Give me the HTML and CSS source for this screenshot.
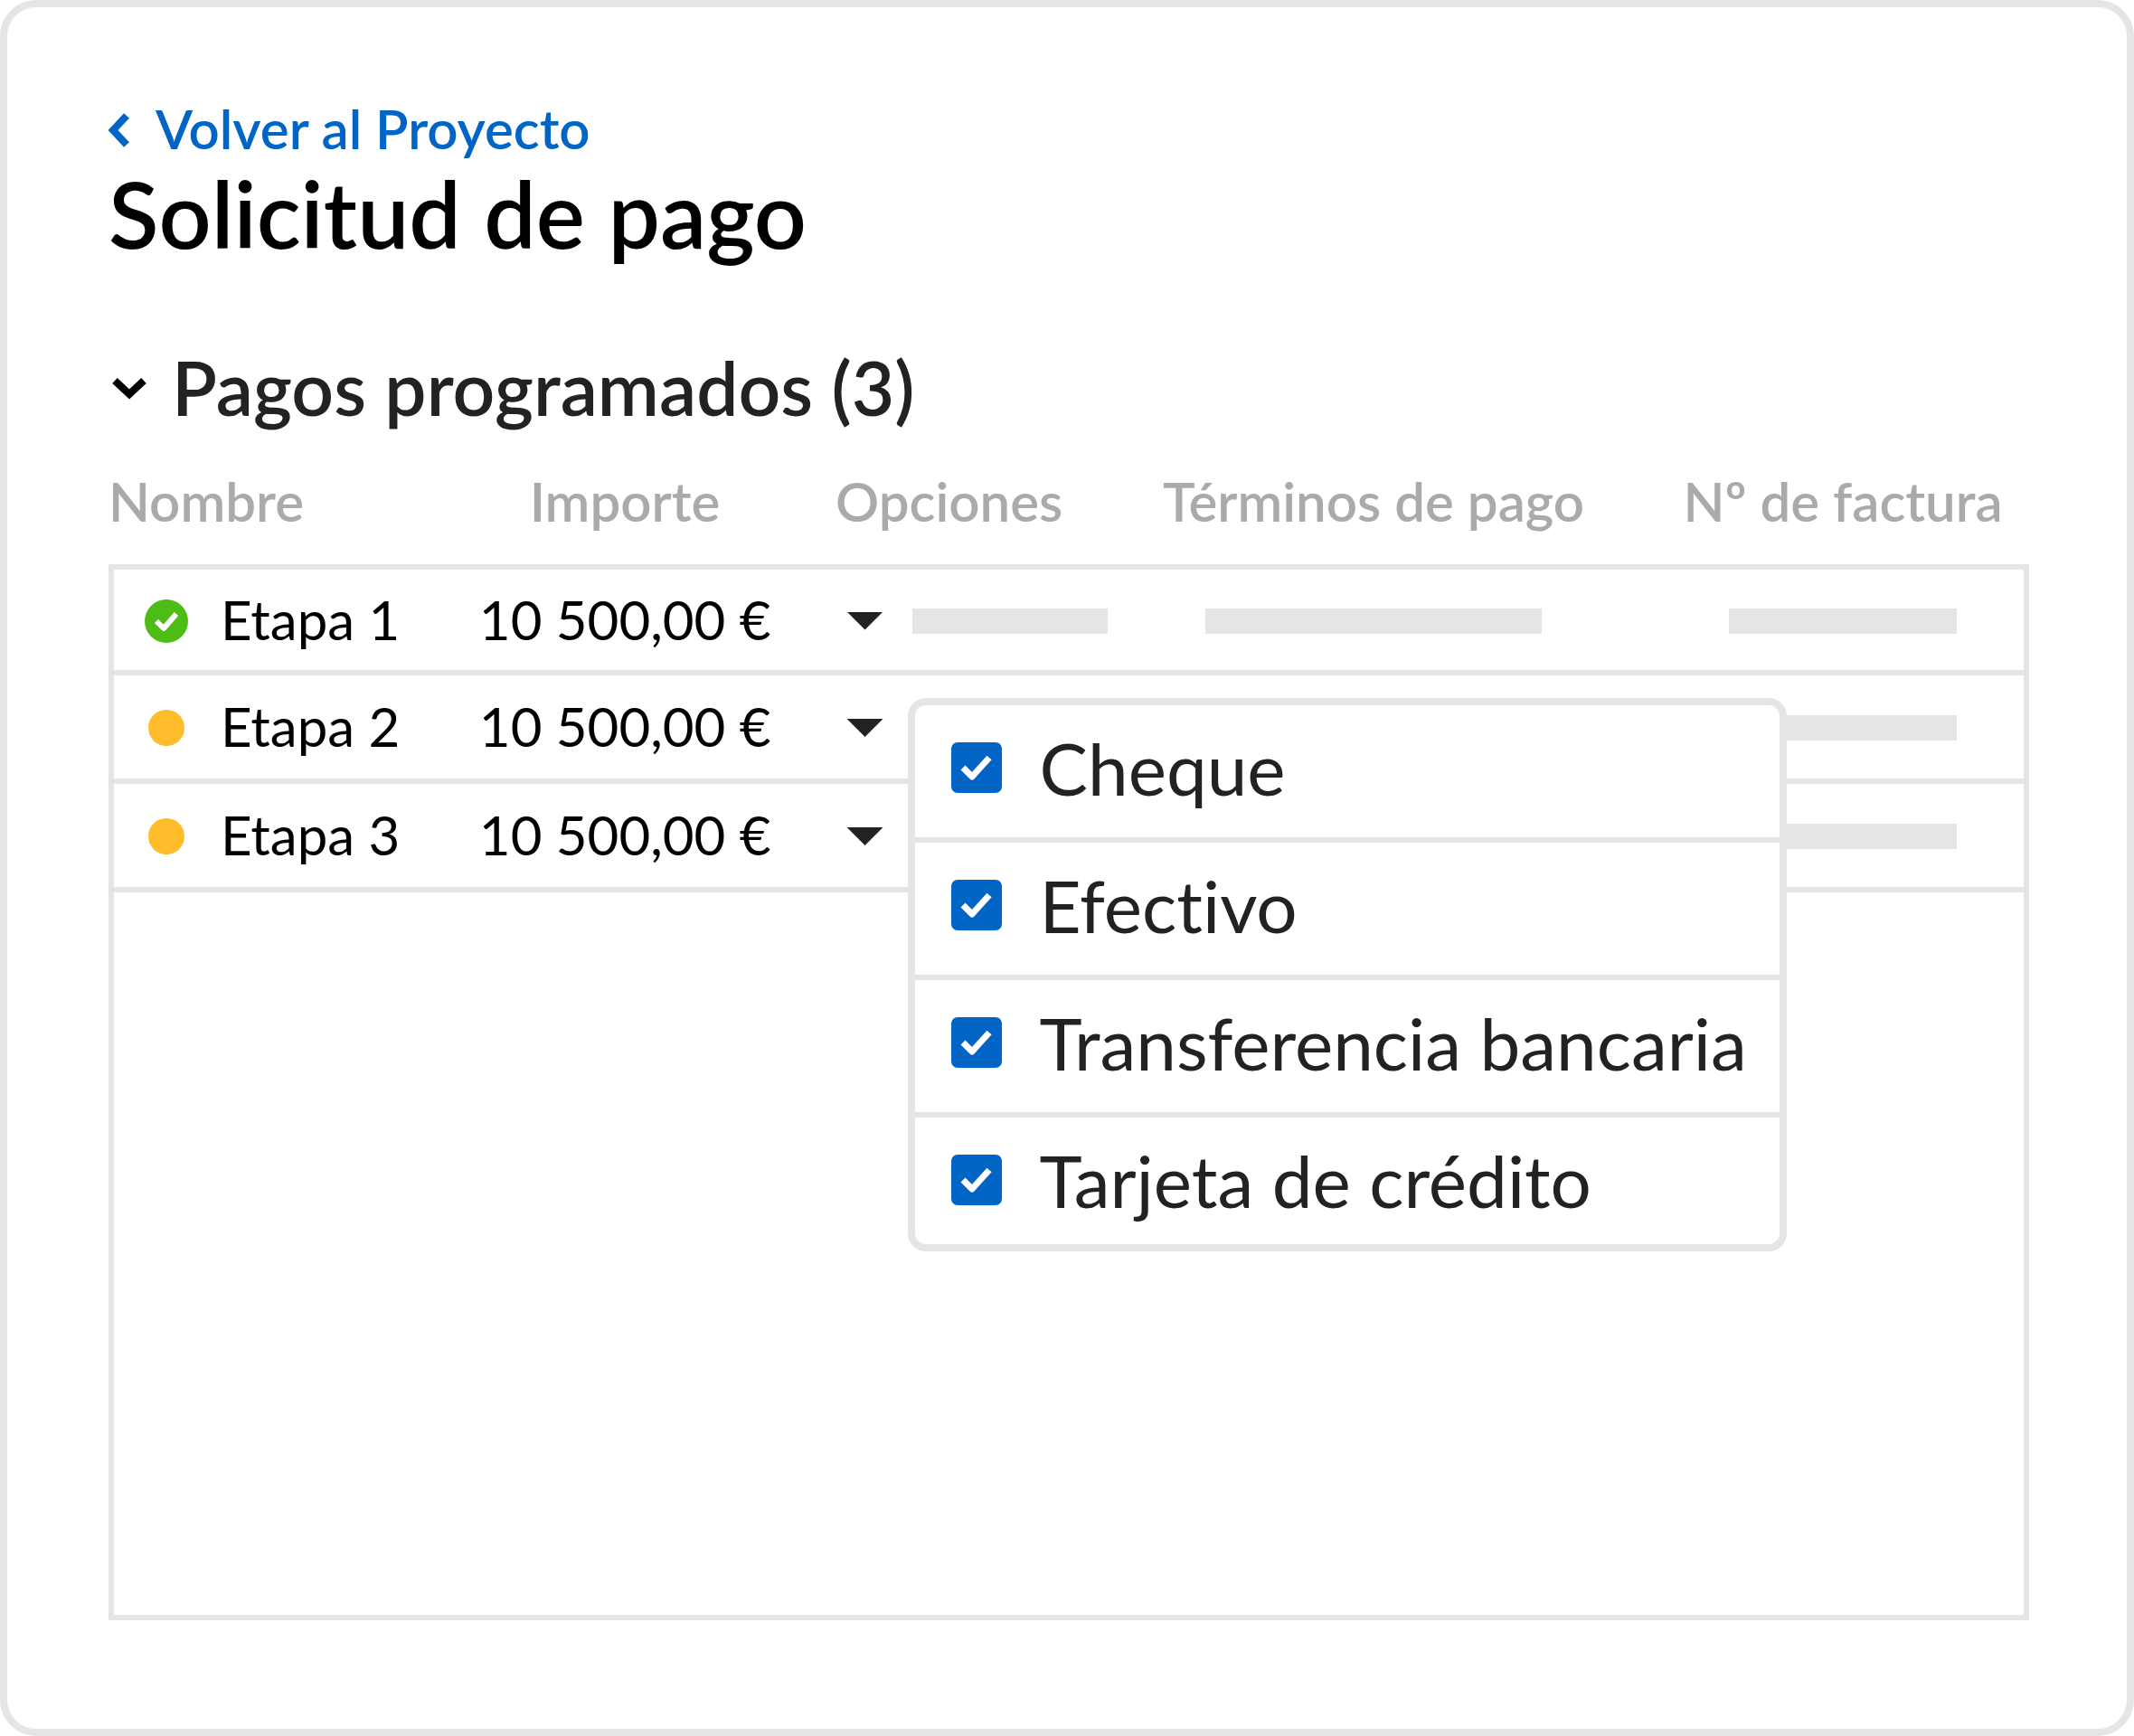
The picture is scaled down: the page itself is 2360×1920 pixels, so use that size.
FILE: index.html
```html
<!DOCTYPE html>
<html lang="es">
<head>
    <meta charset="UTF-8">
    <meta name="viewport" content="width=device-width, initial-scale=1.0">
    <title>Solicitud de pago</title>
    <link rel="stylesheet" href="styles.css">
</head>
<body>

<main class="card">
    <a href="#" class="back-link">
        <svg class="back-icon" width="24" height="38" viewBox="0 0 24 38"><path d="M20 3L5 19l15 16" /></svg>
        Volver al Proyecto
    </a>
    <h1 class="title">Solicitud de pago</h1>

    <h2 class="section-heading">
        <button type="button" class="section-toggle" aria-expanded="true">
            <svg class="toggle-icon" width="38" height="24" viewBox="0 0 38 24"><path d="M3 3l16 15L35 3" /></svg>
            Pagos programados (3)
        </button>
    </h2>

    <table class="payments">
        <thead>
            <tr>
                <th class="name">Nombre</th>
                <th class="amount">Importe</th>
                <th class="options">Opciones</th>
                <th class="terms">Términos de pago</th>
                <th class="invoice">Nº de factura</th>
            </tr>
        </thead>
        <tbody>
            <tr>
                <td class="name">
                    <svg class="status" width="48" height="48" viewBox="0 0 48 48"><circle cx="24" cy="24" r="24" fill="#4dbd15" /><path d="M13 24l8 8 14-16" fill="none" stroke="#fff" stroke-width="6" stroke-linejoin="round" /></svg>
                    Etapa 1
                </td>
                <td class="amount">10 500,00 €</td>
                <td class="options">
                    <button type="button" class="caret" aria-label="Opciones de Etapa 1"></button>
                    <span class="bar bar-options"></span>
                </td>
                <td class="terms"><span class="bar bar-terms"></span></td>
                <td class="invoice"><span class="bar bar-invoice"></span></td>
            </tr>
            <tr>
                <td class="name">
                    <svg class="status" width="48" height="48" viewBox="0 0 48 48"><circle cx="24" cy="24" r="20" fill="#ffbd2b" /></svg>
                    Etapa 2
                </td>
                <td class="amount">10 500,00 €</td>
                <td class="options">
                    <button type="button" class="caret" aria-label="Opciones de Etapa 2" aria-expanded="true"></button>
                    <div class="menu">
                        <label class="menu-item"><input type="checkbox" checked>Cheque</label>
                        <label class="menu-item"><input type="checkbox" checked>Efectivo</label>
                        <label class="menu-item"><input type="checkbox" checked>Transferencia bancaria</label>
                        <label class="menu-item"><input type="checkbox" checked>Tarjeta de crédito</label>
                    </div>
                </td>
                <td class="terms"></td>
                <td class="invoice"><span class="bar bar-invoice"></span></td>
            </tr>
            <tr>
                <td class="name">
                    <svg class="status" width="48" height="48" viewBox="0 0 48 48"><circle cx="24" cy="24" r="20" fill="#ffbd2b" /></svg>
                    Etapa 3
                </td>
                <td class="amount">10 500,00 €</td>
                <td class="options">
                    <button type="button" class="caret" aria-label="Opciones de Etapa 3"></button>
                </td>
                <td class="terms"></td>
                <td class="invoice"><span class="bar bar-invoice"></span></td>
            </tr>
        </tbody>
    </table>
</main>

</body>
</html>
```
FILE: styles.css
```css
* {
    box-sizing: border-box;
}

body {
    margin: 0;
    background: #ffffff;
    font-family: Lato, 'Open Sans', sans-serif;
    font-size: 60px;
    line-height: 72px;
    font-variant-ligatures: none;
    color: #000000;
}

.card {
    display: flex;
    flex-direction: column;
    min-height: 100vh;
    padding: 98px 108px 120px 112px;
    border: 8px solid #e5e5e5;
    border-radius: 40px;
}

.back-link {
    display: flex;
    align-items: center;
    gap: 28px;
    align-self: flex-start;
    font-weight: 600;
    color: #0065c4;
    text-decoration: none;
}

.back-icon,
.toggle-icon {
    margin-top: 4px;
    fill: none;
    stroke: currentColor;
    stroke-width: 8;
}

.title {
    margin: 0;
    font-size: 102px;
    line-height: 116px;
    font-weight: 600;
}

.section-heading {
    margin: 86px 0 0;
    font-size: 82px;
    line-height: 96px;
}

.section-toggle {
    display: flex;
    align-items: center;
    gap: 28px;
    padding: 0 4px;
    border: none;
    background: none;
    font: inherit;
    font-weight: 600;
    color: #222222;
    cursor: pointer;
}

.toggle-icon {
    color: #000000;
}

.payments {
    display: flex;
    flex-direction: column;
    flex: 1;
    margin-top: 42px;
}

.payments thead {
    display: block;
    margin-bottom: 34px;
}

.payments tbody {
    display: block;
    flex: 1;
    padding-top: 6px;
    box-shadow: inset 0 0 0 6px #e5e5e5;
}

.payments tr {
    display: grid;
    grid-template-columns: 362fr 322fr 330fr 482fr 436fr;
    column-gap: 48px;
}

.payments tbody tr {
    height: 120px;
    border-bottom: 6px solid #e5e5e5;
}

.payments tbody tr:first-child {
    height: 117px;
}

.payments th,
.payments td {
    display: flex;
    align-items: center;
    justify-content: center;
    padding: 0;
    white-space: nowrap;
}

.payments td {
    padding-bottom: 2px;
}

.payments th {
    font-weight: 600;
    color: #aaaaaa;
}

.payments .name,
.payments .options {
    justify-content: flex-start;
}

.payments .invoice {
    padding-left: 24px;
}

.payments th.options {
    padding-left: 24px;
}

.payments td.name {
    gap: 36px;
    padding-left: 40px;
}

.payments td.options {
    position: relative;
    gap: 32px;
    padding-left: 36px;
}

.status,
.caret,
.bar {
    margin-top: 4px;
}

.caret {
    width: 40px;
    height: 20px;
    padding: 0;
    border: none;
    background: #222222;
    clip-path: polygon(0 0, 100% 0, 50% 100%);
    cursor: pointer;
}

.bar {
    height: 28px;
    background: #e5e5e5;
}

.bar-options {
    width: 216px;
}

.bar-terms {
    width: 372px;
}

.bar-invoice {
    width: 252px;
}

/* payment methods dropdown */
.menu {
    position: absolute;
    top: 25px;
    left: 103px;
    z-index: 1;
    min-width: 972px;
    border: 8px solid #e5e5e5;
    border-radius: 20px;
    background: #ffffff;
    font-size: 80px;
    line-height: 96px;
    color: #222222;
}

.menu-item {
    display: flex;
    align-items: center;
    gap: 42px;
    height: 152px;
    padding: 0 30px 8px 40px;
    border-bottom: 6px solid #e5e5e5;
}

.menu-item:last-child {
    height: 140px;
    padding-bottom: 2px;
    border-bottom: none;
}

.menu-item input {
    appearance: none;
    width: 56px;
    height: 56px;
    margin: 0;
    border-radius: 7px;
}

.menu-item input:checked {
    background: #0065c4 url("data:image/svg+xml,%3Csvg xmlns='http://www.w3.org/2000/svg' viewBox='0 0 56 56'%3E%3Cpath d='M13 28l10 10 19-21' fill='none' stroke='%23fff' stroke-width='7' stroke-linejoin='round'/%3E%3C/svg%3E");
}
```
